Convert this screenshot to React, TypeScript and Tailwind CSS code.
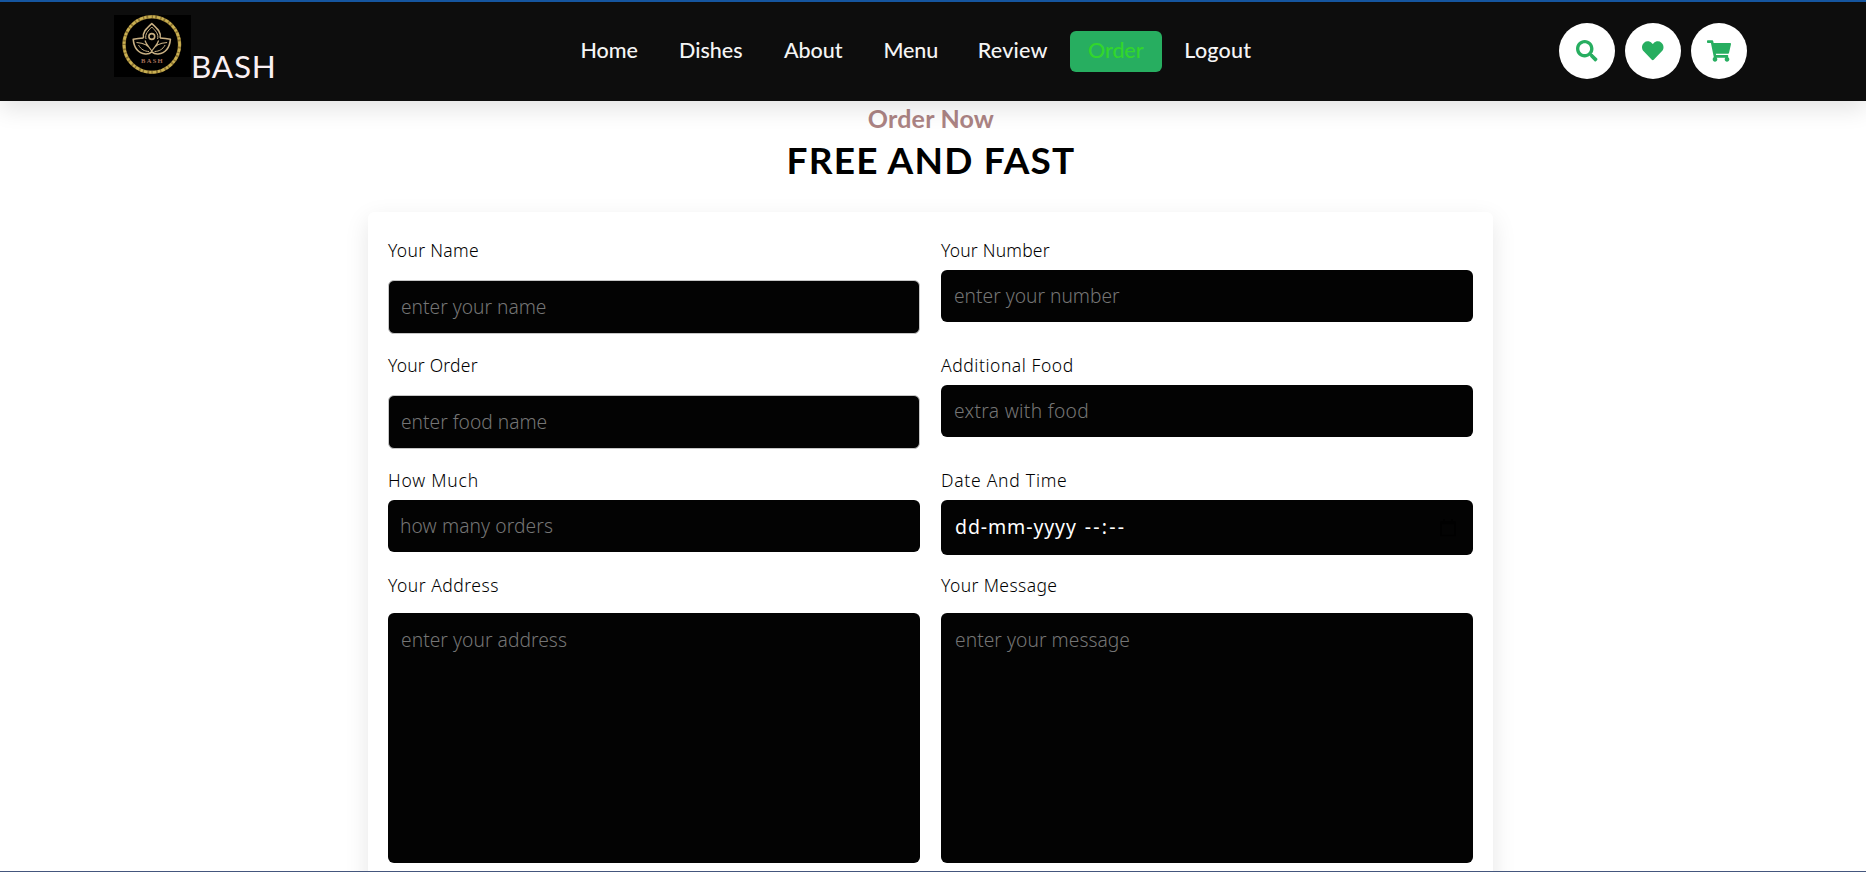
import { FaHeart, FaSearch, FaShoppingCart } from "react-icons/fa";

const links = [
  { label: "Home", box: "w-[93px]", tracking: "tracking-normal" },
  { label: "Dishes", box: "w-[100px]", tracking: "tracking-normal" },
  { label: "About", box: "w-[95px]", tracking: "tracking-normal" },
  { label: "Menu", box: "w-[90px]", tracking: "tracking-[-0.1px]" },
  { label: "Review", box: "w-[104px]", tracking: "tracking-[0.2px]" },
  { label: "Order", box: "w-[92px]", tracking: "tracking-[-0.1px]", active: true },
  { label: "Logout", box: "w-[102px]", tracking: "tracking-[0.2px]" },
];

const fieldBase =
  "block w-full resize-none rounded-[6px] bg-[#030303] font-[360] text-[19.2px] text-white outline-none placeholder:text-[#757575]";

function Logo() {
  return (
    <svg viewBox="0 0 77 62" className="h-[62px] w-[77px] shrink-0 bg-black" fill="none">
      <circle cx="37.8" cy="29.5" r="27.8" stroke="#8d7431" strokeWidth="3.4" />
      <circle cx="37.8" cy="29.5" r="27.8" stroke="#c9b052" strokeWidth="2.6" strokeDasharray="2.2 1.8 3.5 1.3" />
      <g stroke="#c9b083" strokeWidth="1.6" strokeLinejoin="round">
        <path d="M29.500 23c-1.500-6 3.500-10 8.300-14.500 4.800 4.500 9.800 8.500 8.300 14.500" />
        <path d="M32 24c-1.500-5 2.500-8.500 5.800-12 3.300 3.500 7.300 7 5.800 12" strokeWidth="1" />
        <circle cx="37.800" cy="21.500" r="2.900" />
        <path d="M29.500 23c-3.500.2-7 .6-10.300 1.200.7 8 4.800 13.800 12.300 14.800 2.500.2 4.600-.6 6.300-2.200 1.700 1.600 3.800 2.400 6.300 2.200 7.500-1 11.600-6.800 12.300-14.800-3.300-.6-6.800-1-10.300-1.200" />
        <path d="M31 25.500c1 4 4 6.500 6.800 10.500 2.800-4 5.800-6.500 6.800-10.500M22.500 27.500c7 .3 12.500 3 15.300 8.500 2.800-5.500 8.300-8.200 15.300-8.500" strokeWidth="1.200" />
        <path d="M24.500 30c2.500 4.500 6 6.300 10.500 6.500M51.100 30c-2.500 4.500-6 6.300-10.500 6.500" strokeWidth="1" />
      </g>
      <text
        x="38.500"
        y="48"
        textAnchor="middle"
        fill="#a8705c"
        fontSize="6.500"
        fontWeight="700"
        letterSpacing="1.300"
        fontFamily="Liberation Serif, serif"
      >
        BASH
      </text>
    </svg>
  );
}

function Label({ text, tracking }: { text: string; tracking: string }) {
  return <div className={`h-[24px] whitespace-nowrap text-[17.5px] font-[350] leading-[24px] text-black ${tracking}`}>{text}</div>;
}

function CalendarIcon() {
  return (
    <svg viewBox="0 0 16 18" className="h-[18px] w-[16px]" fill="none" stroke="#000" strokeWidth="1.500">
      <path d="M1 3h14v13.500H1zM1 4.500h14M4 0v3M12 0v3" />
    </svg>
  );
}

export default function App() {
  return (
    <div className="flex h-[872px] flex-col overflow-hidden border-b border-[#44567d] bg-white font-['Lato',sans-serif]">
      <header className="relative z-10 flex h-[101px] shrink-0 items-center justify-between border-t-2 border-[#15559f] bg-[#0d0d0d] pl-[114px] pr-[119px] shadow-[0_8px_22px_rgba(0,0,0,0.11)]">
        <div className="flex h-full w-[159px] items-start pt-[13px]">
          <Logo />
          <span className="mt-[32px] text-[31.500px] leading-[38px] tracking-[0.8px] text-[#fbf0f3]">BASH</span>
        </div>
        <nav className="flex gap-[5px] pb-[1px]">
          {links.map((l) => (
            <a
              key={l.label}
              className={`flex h-[41px] items-center justify-center rounded-[6px] pb-[1px] text-[21.500px] font-medium ${l.box} ${l.tracking} ${
                l.active ? "bg-[#27ae60] text-[#32d62c]" : "text-[#f5f5f5]"
              }`}
            >
              {l.label}
            </a>
          ))}
        </nav>
        <div className="flex gap-[9.500px] pb-[1px] text-[21.500px] text-[#27ae60]">
          <a className="flex h-[56.500px] w-[56.500px] items-center justify-center rounded-full bg-white"><FaSearch /></a>
          <a className="flex h-[56.500px] w-[56.500px] items-center justify-center rounded-full bg-white"><FaHeart /></a>
          <a className="flex h-[56.500px] w-[56.500px] items-center justify-center rounded-full bg-white"><FaShoppingCart className="h-[22px] w-[24px]" /></a>
        </div>
      </header>

      <div className="flex h-[111px] shrink-0 flex-col items-center pr-[4px]">
        <h3 className="mt-[1px] h-[32px] text-[25px] font-bold leading-[32px] tracking-[0.2px] text-[#ac8484]">Order Now</h3>
        <h1 className="mt-[3px] h-[46px] text-[37px] font-bold leading-[46px] tracking-[1.2px] text-black">FREE AND FAST</h1>
      </div>

      <form className="ml-[368px] grid h-[700px] w-[1125px] shrink-0 grid-cols-[532px_532px] grid-rows-[115px_115px_105px_auto] gap-x-[21px] rounded-[6px] bg-white px-[20px] pt-[26px] font-['Noto_Sans',sans-serif] shadow-[0_8px_24px_rgba(0,0,0,0.1)]">
        <div>
          <Label text="Your Name" tracking="tracking-[0.300px]" />
          <input className={`${fieldBase} mt-[18px] h-[54px] border border-[#c6c6c6] px-[12px] pb-[2px]`} placeholder="enter your name" />
        </div>
        <div>
          <Label text="Your Number" tracking="tracking-[0.200px]" />
          <input className={`${fieldBase} mt-[8px] h-[52px] px-[13px] pb-[1px]`} placeholder="enter your number" />
        </div>
        <div>
          <Label text="Your Order" tracking="tracking-[0.200px]" />
          <input className={`${fieldBase} mt-[18px] h-[54px] border border-[#c6c6c6] px-[12px] pb-[1px]`} placeholder="enter food name" />
        </div>
        <div>
          <Label text="Additional Food" tracking="tracking-[0.550px]" />
          <input className={`${fieldBase} mt-[8px] h-[52px] px-[13px] pb-[1px] tracking-[0.300px]`} placeholder="extra with food" />
        </div>
        <div>
          <Label text="How Much" tracking="tracking-[0.800px]" />
          <input className={`${fieldBase} mt-[8px] h-[52px] px-[12px] pb-[1px] tracking-[0.100px]`} placeholder="how many orders" />
        </div>
        <div>
          <Label text="Date And Time" tracking="tracking-[0.750px]" />
          <div className="mt-[8px] flex h-[55px] items-center justify-between rounded-[6px] bg-[#030303] pl-[14px] pr-[17px] text-[19.500px] text-white">
            <span className="flex gap-[8px] pb-[1px]">
              <span className="tracking-[0.900px]">dd-mm-yyyy</span>
              <span className="tracking-[2.200px]">--:--</span>
            </span>
            <CalendarIcon />
          </div>
        </div>
        <div>
          <Label text="Your Address" tracking="tracking-[0.500px]" />
          <textarea className={`${fieldBase} mt-[16px] h-[250px] px-[13px] pt-[13px] tracking-[0.050px]`} placeholder="enter your address" />
        </div>
        <div>
          <Label text="Your Message" tracking="tracking-[0.400px]" />
          <textarea className={`${fieldBase} mt-[16px] h-[250px] px-[14px] pt-[13px] tracking-[0.050px]`} placeholder="enter your message" />
        </div>
      </form>
    </div>
  );
}
